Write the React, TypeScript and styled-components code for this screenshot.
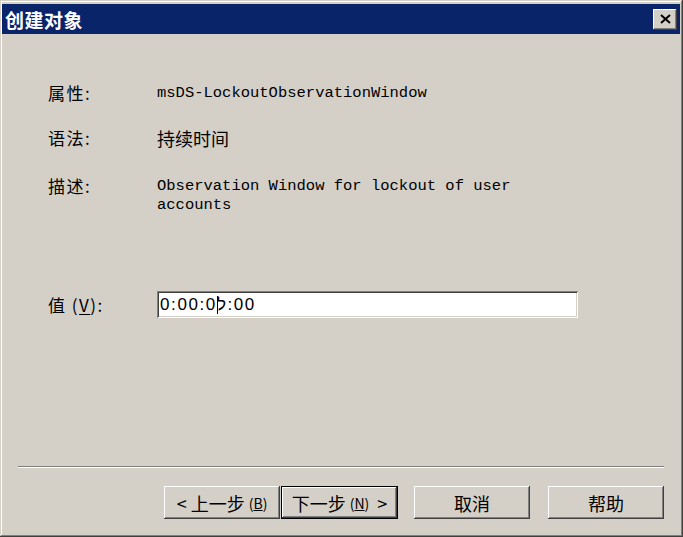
import styled, { createGlobalStyle } from 'styled-components';

const GlobalStyle = createGlobalStyle`
  html, body {
    margin: 0;
    padding: 0;
    background: #d4d0c8;
  }
  * {
    box-sizing: border-box;
  }
`;

const CJK = `"Noto Sans CJK SC", "Noto Sans", sans-serif`;
const MONO = `"Liberation Mono", "DejaVu Sans Mono", monospace`;

function App() {
  return (
    <>
      <GlobalStyle />
      <Window>
        <TitleBar>
          <TitleText>创建对象</TitleText>
          <CloseButton aria-label="关闭">
            <svg width="11" height="10" viewBox="0 0 11 10">
              <path d="M1 1 L10 9 M10 1 L1 9" stroke="#000" strokeWidth="2" />
            </svg>
          </CloseButton>
        </TitleBar>

        <Body>
          <Row $top={49}>
            <Label>属性:</Label>
            <MonoValue>msDS-LockoutObservationWindow</MonoValue>
          </Row>
          <Row $top={25}>
            <Label>语法:</Label>
            <SyntaxValue>持续时间</SyntaxValue>
          </Row>
          <Row $top={28}>
            <Label>描述:</Label>
            <MonoValue>
              Observation Window for lockout of user
              <br />
              accounts
            </MonoValue>
          </Row>
          <Row $top={76} $center>
            <Label>
              值 (<u>V</u>):
            </Label>
            <TextBox>
              0:00:0<Caret />ל:00
            </TextBox>
          </Row>

          <Spacer />
          <Separator />

          <ButtonRow>
            <Button>
              &lt; 上一步 <Key>(<u>B</u>)</Key>
            </Button>
            <Button $default $gap={1}>
              下一步 <Key>(<u>N</u>)</Key>  &gt;
            </Button>
            <Button $gap={16}>取消</Button>
            <Button $gap={18}>帮助</Button>
          </ButtonRow>
        </Body>
      </Window>
    </>
  );
}

export default App;

const Window = styled.div`
  width: 683px;
  height: 537px;
  display: flex;
  flex-direction: column;
  padding: 4px 3px 3px 2px;
  background: #d4d0c8;
  box-shadow:
    inset -1px -1px #404040,
    inset 1px 1px #d4d0c8,
    inset -2px -2px #808080,
    inset 2px 2px #ffffff;
`;

const TitleBar = styled.div`
  height: 30px;
  display: flex;
  align-items: center;
  justify-content: space-between;
  padding: 0 3px 0 3px;
  background: #0a246a;
`;

const TitleText = styled.span`
  font-family: ${CJK};
  font-size: 19px;
  font-weight: 700;
  letter-spacing: 0.5px;
  color: #ffffff;
  line-height: 1;
`;

const CloseButton = styled.div`
  width: 24px;
  height: 21px;
  display: flex;
  align-items: center;
  justify-content: center;
  background: #d4d0c8;
  box-shadow:
    inset -1px -1px #404040,
    inset 1px 1px #ffffff,
    inset -2px -2px #808080;
`;

const Body = styled.div`
  flex: 1;
  display: flex;
  flex-direction: column;
`;

const Row = styled.div<{ $top: number; $center?: boolean }>`
  display: flex;
  align-items: ${(p) => (p.$center ? 'center' : 'flex-start')};
  margin-top: ${(p) => p.$top}px;
  padding-left: 46px;
`;

const Label = styled.span`
  width: 109px;
  flex: none;
  font-family: ${CJK};
  font-size: 17px;
  letter-spacing: 1.5px;
  line-height: 20px;
  color: #000;
  white-space: pre;

  u {
    text-underline-offset: 2px;
  }
`;

const MonoValue = styled.span`
  font-family: ${MONO};
  font-size: 15.5px;
  line-height: 19px;
  color: #000;
  padding-top: 1px;
`;

const SyntaxValue = styled.span`
  font-family: ${CJK};
  font-size: 18px;
  line-height: 20px;
  color: #000;
`;

const TextBox = styled.div`
  width: 421px;
  height: 27px;
  display: flex;
  align-items: center;
  padding-left: 3px;
  background: #ffffff;
  font-family: "Liberation Sans", Arial, sans-serif;
  font-size: 17px;
  letter-spacing: 1.6px;
  color: #000;
  direction: ltr;
  unicode-bidi: bidi-override;
  box-shadow:
    inset 1px 1px #808080,
    inset -1px -1px #ffffff,
    inset 2px 2px #404040,
    inset -2px -2px #d4d0c8;
`;

const Caret = styled.span`
  display: inline-block;
  width: 1px;
  height: 18px;
  background: #000;
  margin: 0 -1px 0 0;
`;

const Spacer = styled.div`
  flex: 1;
`;

const Separator = styled.div`
  height: 2px;
  margin: 0 16px 0 16px;
  border-top: 1px solid #808080;
  border-bottom: 1px solid #ffffff;
`;

const ButtonRow = styled.div`
  display: flex;
  justify-content: flex-end;
  padding: 18px 16px 15px 0;
`;

const Button = styled.div<{ $default?: boolean; $gap?: number }>`
  width: ${(p) => (p.$default ? 117 : 116)}px;
  height: 33px;
  margin-left: ${(p) => p.$gap ?? 0}px;
  display: flex;
  align-items: center;
  justify-content: center;
  background: #d4d0c8;
  font-family: ${CJK};
  font-size: 18px;
  color: #000;
  white-space: pre;
  box-shadow: ${(p) =>
    p.$default
      ? `inset 0 0 0 1px #000, inset -2px -2px #404040, inset 2px 2px #ffffff, inset -3px -3px #808080`
      : `inset -1px -1px #404040, inset 1px 1px #ffffff, inset -2px -2px #808080`};
`;

const Key = styled.span`
  font-size: 14px;
`;
